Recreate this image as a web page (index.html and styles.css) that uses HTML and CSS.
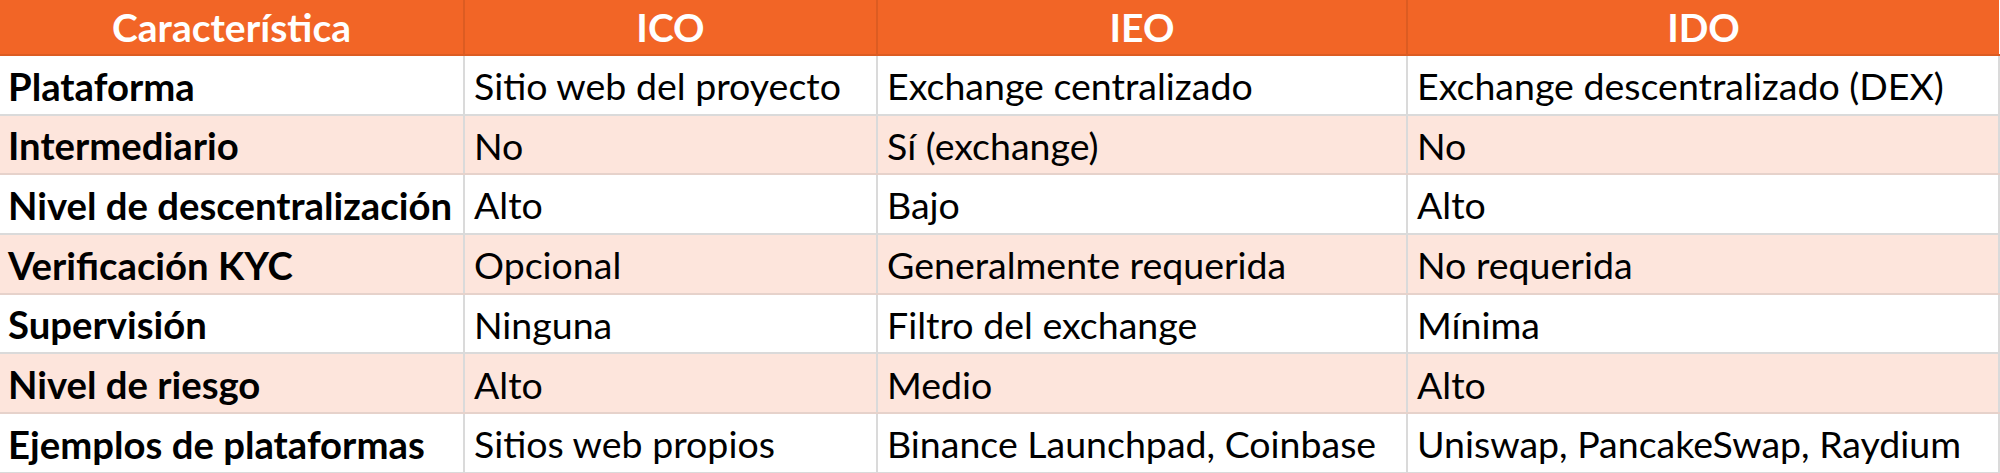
FILE: index.html
```html
<!DOCTYPE html>
<html lang="es">
<head>
<meta charset="utf-8">
<title>ICO vs IEO vs IDO</title>
<link rel="stylesheet" href="styles.css">
</head>
<body>
<table class="cmp">
  <colgroup>
    <col class="c1"><col class="c2"><col class="c3"><col class="c4">
  </colgroup>
  <thead>
    <tr class="head">
      <th>Característica</th><th>ICO</th><th>IEO</th><th>IDO</th>
    </tr>
  </thead>
  <tbody>
    <tr class="w"><td class="k">Plataforma</td><td>Sitio web del proyecto</td><td>Exchange centralizado</td><td>Exchange descentralizado (DEX)</td></tr>
    <tr class="p"><td class="k">Intermediario</td><td>No</td><td>Sí (exchange)</td><td>No</td></tr>
    <tr class="w"><td class="k">Nivel de descentralización</td><td>Alto</td><td>Bajo</td><td>Alto</td></tr>
    <tr class="p"><td class="k">Verificación KYC</td><td>Opcional</td><td>Generalmente requerida</td><td>No requerida</td></tr>
    <tr class="w"><td class="k">Supervisión</td><td>Ninguna</td><td>Filtro del exchange</td><td>Mínima</td></tr>
    <tr class="p"><td class="k">Nivel de riesgo</td><td>Alto</td><td>Medio</td><td>Alto</td></tr>
    <tr class="w"><td class="k">Ejemplos de plataformas</td><td>Sitios web propios</td><td>Binance Launchpad, Coinbase</td><td>Uniswap, PancakeSwap, Raydium</td></tr>
  </tbody>
</table>
</body>
</html>
```
FILE: styles.css
```css
html, body {
  margin: 0;
  padding: 0;
  background: #ffffff;
}
body {
  font-family: Lato, "Open Sans", sans-serif;
  color: #000;
}
.cmp {
  border-collapse: collapse;
  table-layout: fixed;
  width: 1999px;
}
.c1 { width: 464px; }
.c2 { width: 413px; }
.c3 { width: 530px; }
.c4 { width: 592px; }

tr.head { height: 55px; }
tbody tr { height: 59.7px; }

.head th {
  background: #f26526;
  color: #ffffff;
  font-weight: 700;
  font-size: 39px;
  line-height: 1;
  padding: 0 8px;
  text-align: center;
  vertical-align: middle;
  border-left: 2px solid #dc5c22;
  border-bottom: 2px solid #dc5c22;
}
.head th:first-child { border-left: none; }

td {
  font-size: 37.5px;
  line-height: 1;
  padding: 2px 9px 0;
  vertical-align: middle;
  white-space: nowrap;
  border: 2px solid #dadada;
  border-top: none;
}
td:first-child { border-left: none; }
td.k { font-weight: 700; font-size: 38.3px; padding-left: 8px; }
tr.p td { background: #fde5dc; border-bottom-color: #e6d2cb; }
tr.w td { background: #ffffff; }
```
